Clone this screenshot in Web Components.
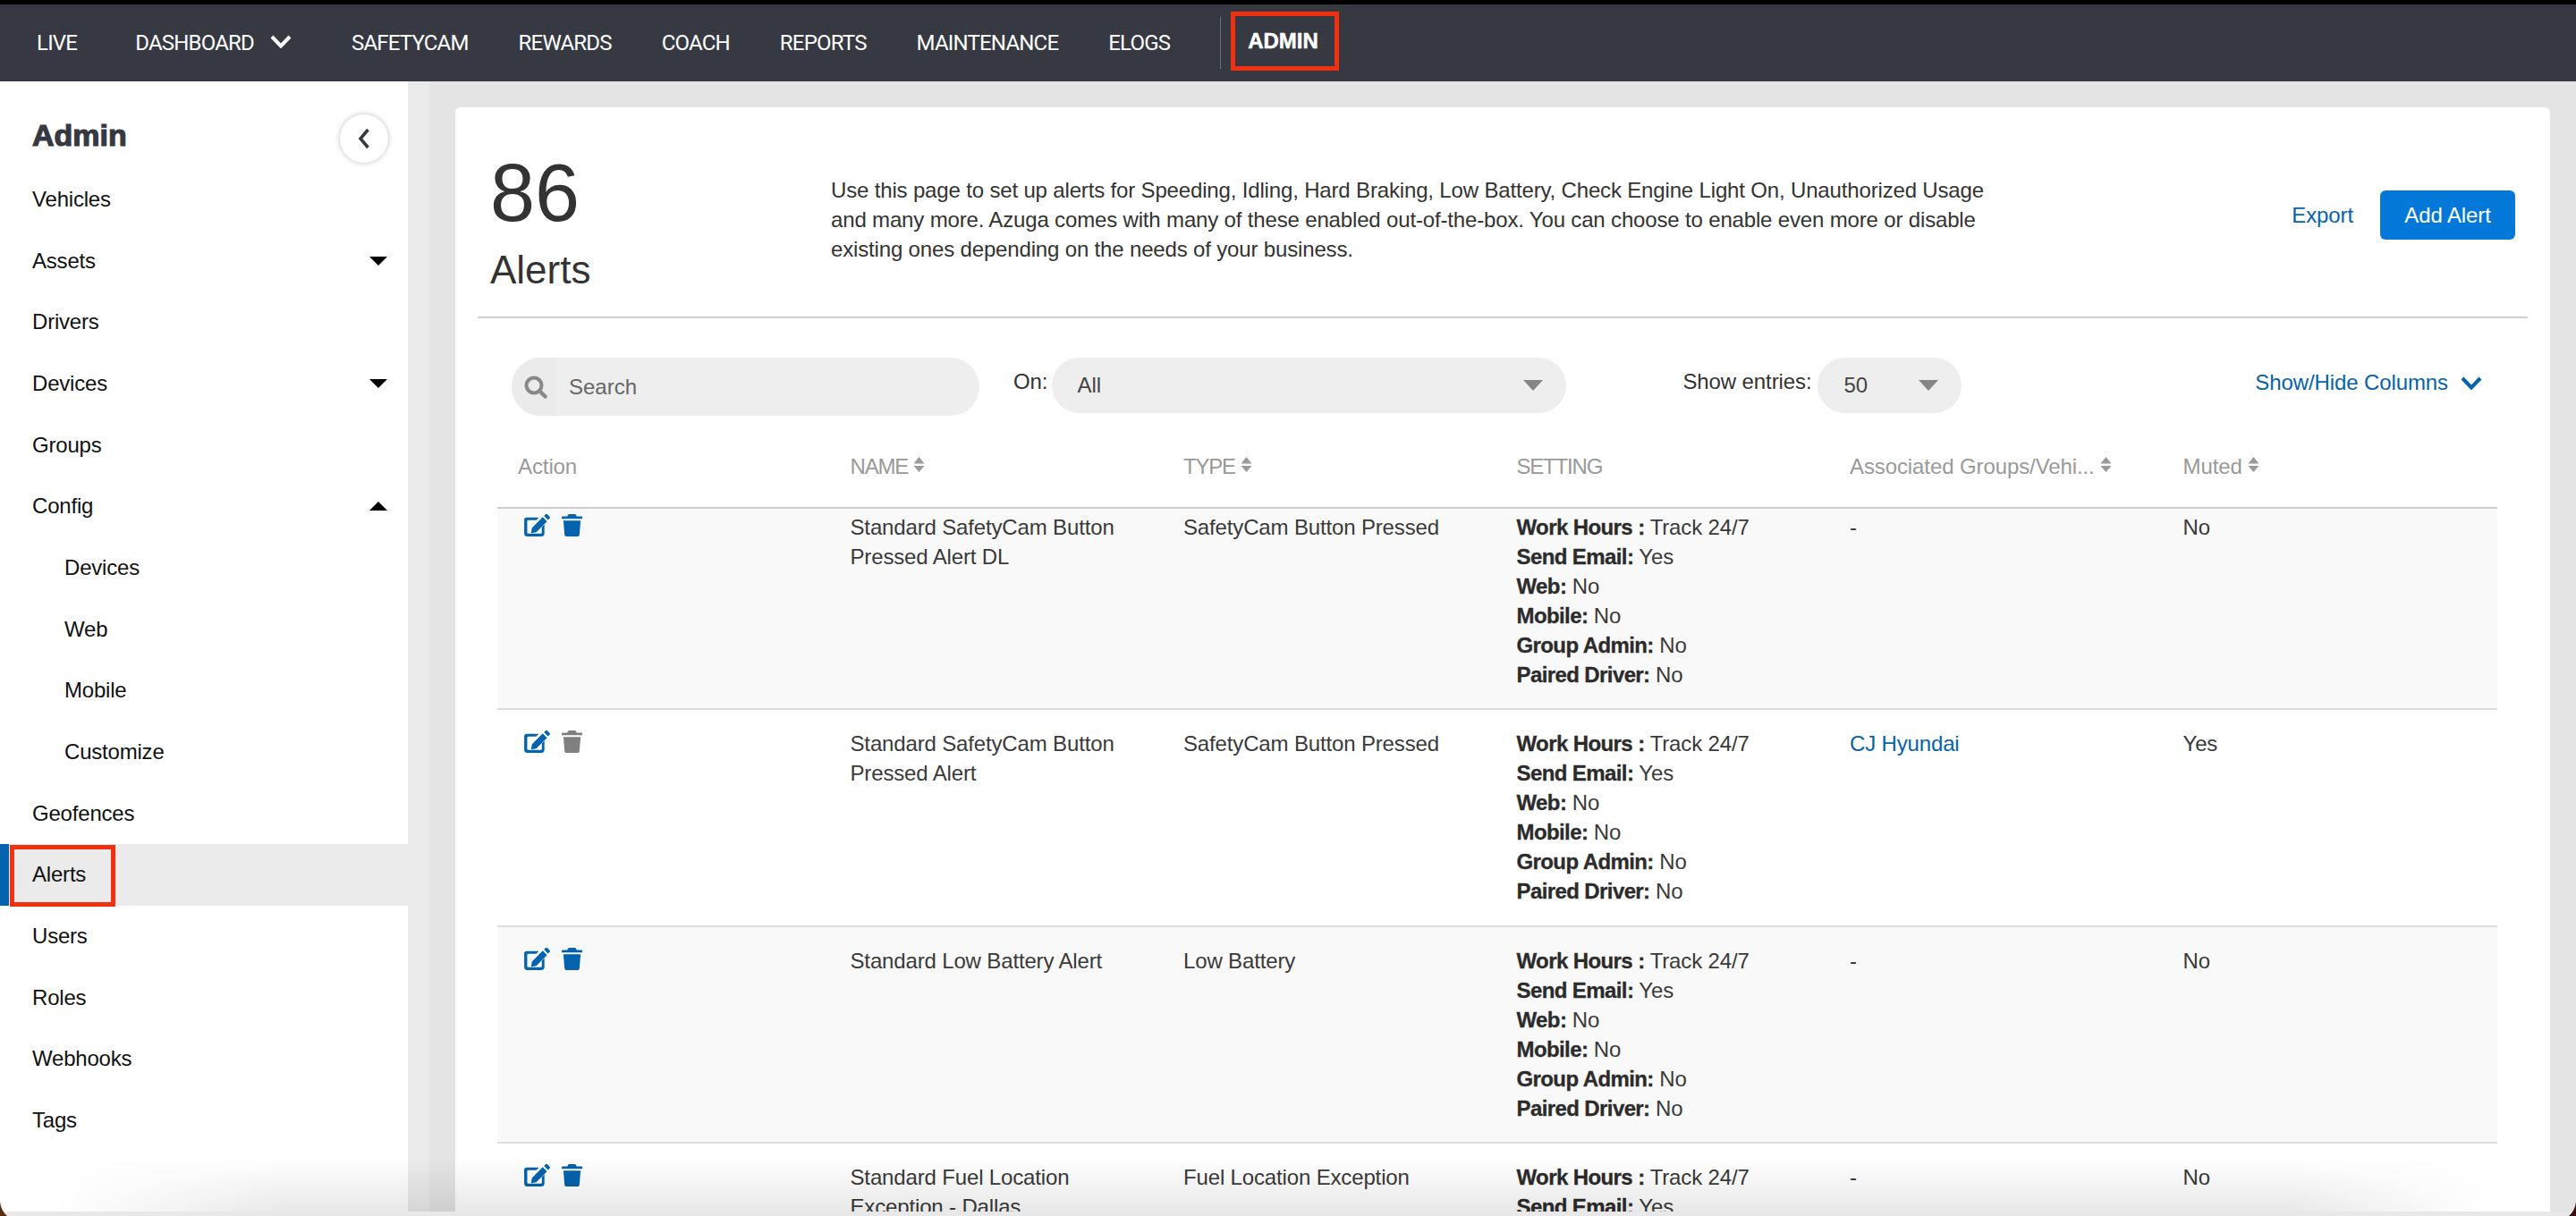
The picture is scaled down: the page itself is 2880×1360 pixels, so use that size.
<!DOCTYPE html>
<html lang="en">
<head>
<meta charset="UTF-8">
<title>Alerts</title>
<style>
  html, body { margin: 0; padding: 0; height: 100%; overflow: hidden; background: #e4e4e4; }
  body { font-family: "Liberation Sans", Arial, sans-serif; }
</style>
</head>
<body>
<admin-app></admin-app>

<script>
const ICONS = {
  edit: `<svg viewBox="0 0 30 26" width="29" height="25"><path fill="currentColor" d="M3 4h14l-3 3H4.500a1 1 0 0 0-1 1v13.500a1 1 0 0 0 1 1h15a1 1 0 0 0 1-1V15l3-3v10a4 4 0 0 1-4 4H4a4 4 0 0 1-4-4V7a3 3 0 0 1 3-3z"/><path fill="currentColor" d="M21.500 3.500l5 5L14 21l-6 1 1-6zM23 2l2-2c.6-.4 1.200-.4 1.700 0l3 3c.4.500.4 1.100 0 1.700l-2 2z"/></svg>`,
  trash: `<svg viewBox="0 0 24 26" width="23" height="25"><path fill="currentColor" d="M8 0h8l1.500 2.500H23a1 1 0 0 1 1 1V5.500H0V3.500a1 1 0 0 1 1-1h5.500zM2 7.500h20l-1.300 16.500a2 2 0 0 1-2 2H5.300a2 2 0 0 1-2-2z"/></svg>`,
  sort: `<svg viewBox="0 0 13 17" width="13" height="17"><path fill="#9a9a9a" d="M6.500 0l6 7.500H.5zM.5 10h12l-6 7z"/></svg>`,
  chevron: `<svg viewBox="0 0 24 15" width="24" height="15"><path fill="none" stroke="currentColor" stroke-width="4" d="M2 2l10 10.500L22 2"/></svg>`,
  search: `<svg viewBox="0 0 26 26" width="26" height="26"><circle cx="11" cy="11" r="8.500" fill="none" stroke="#888" stroke-width="4"/><path stroke="#888" stroke-width="4.500" stroke-linecap="round" d="M17.500 17.500l6 6"/></svg>`
};

class TopNav extends HTMLElement {
  constructor() {
    super();
    this.attachShadow({ mode: 'open' });
    this.shadowRoot.innerHTML = `
      <style>
        :host { display: flex; align-items: center; gap: 56px; height: 91px; box-sizing: border-box; flex: none; background: #363942;
          border-top: 5px solid #000; color: #fff; font: 24px Roboto, "Liberation Sans", sans-serif; padding-left: 41px; }
        a { color: #fff; white-space: nowrap; letter-spacing: -.8px; }
        .dash { display: flex; align-items: center; gap: 18px; margin-left: 9px; margin-right: 11px; }
        .dash svg { display: block; margin-top: -4px; }
        .last { display: flex; align-items: center; }
        .sep { width: 1px; height: 58px; background: #6c6e75; }
        .admin { font: 700 24px "Liberation Sans", sans-serif; letter-spacing: 0; -webkit-text-stroke: .5px #fff; margin-left: 11px; padding: 0 18px 0 14px; height: 66px; box-sizing: border-box;
          border: 5px solid #f2300f; display: flex; align-items: center; margin-top: -4px; }
      </style>
      <a>LIVE</a>
      <span class="dash"><a>DASHBOARD</a>${ICONS.chevron}</span>
      <a>SAFETYCAM</a>
      <a>REWARDS</a>
      <a>COACH</a>
      <a>REPORTS</a>
      <a>MAINTENANCE</a>
      <a>ELOGS</a>
      <span class="last"><span class="sep"></span><a class="admin">ADMIN</a></span>`;
  }
}

class SideItem extends HTMLElement {
  constructor() {
    super();
    this.attachShadow({ mode: 'open' });
    const caret = this.getAttribute('caret');
    this.shadowRoot.innerHTML = `
      <style>
        :host { display: flex; align-items: center; justify-content: space-between; height: 68.700px;
          box-sizing: border-box; padding-left: 36px; padding-right: 23px; font-size: 24px; letter-spacing: -.2px; color: #111; position: relative; }
        :host([sub]) { padding-left: 72px; }
        :host([active]) { background: #ebebeb; }
        :host([active])::before { content: ""; position: absolute; left: 0; top: 0; bottom: 0; width: 10px; background: #0463ad; }
        :host([active])::after { content: ""; position: absolute; left: 11px; top: 1px; width: 118px; height: 69px;
          box-sizing: border-box; border: 5px solid #f2300f; }
        .caret { width: 0; height: 0; border-left: 10.500px solid transparent; border-right: 10.500px solid transparent; }
        .down { border-top: 10px solid #000; }
        .up { border-bottom: 10px solid #000; }
      </style>
      <slot></slot>${caret ? `<span class="caret ${caret}"></span>` : ''}`;
  }
}

class SideBar extends HTMLElement {
  constructor() {
    super();
    this.attachShadow({ mode: 'open' });
    this.shadowRoot.innerHTML = `
      <style>
        :host { display: block; width: 456px; flex: none; background: #fff; height: 1269px; position: relative; }
        .head { display: flex; align-items: center; justify-content: space-between; height: 81px; padding: 0 22px 0 36px; box-sizing: border-box; margin-top: 23px; }
        h2 { margin: -6px 0 0; font-size: 34px; font-weight: 700; color: #363942; -webkit-text-stroke: 1.200px #363942; }
        .back { width: 54px; height: 54px; border-radius: 50%; background: #fff; box-shadow: 0 0 6px rgba(0,0,0,.25);
          display: flex; align-items: center; justify-content: center; }
        .items { margin-top: -6.500px; }
      </style>
      <div class="head"><h2>Admin</h2>
        <span class="back"><svg viewBox="0 0 14 24" width="14" height="24"><path d="M11.500 2L3 12l8.500 10" fill="none" stroke="#363942" stroke-width="3.500"/></svg></span>
      </div>
      <div class="items"><slot></slot></div>`;
  }
}

class SelectPill extends HTMLElement {
  constructor() {
    super();
    this.attachShadow({ mode: 'open' });
    this.shadowRoot.innerHTML = `
      <style>
        :host { display: flex; align-items: center; justify-content: space-between; height: 62px; box-sizing: border-box;
          border-radius: 31px; background: #eee; padding: 0 26px 0 28px; font-size: 24px; color: #444; }
        i { width: 0; height: 0; border-left: 11px solid transparent; border-right: 11px solid transparent; border-top: 12px solid #858585; }
      </style>
      <slot></slot><i></i>`;
  }
}

class SortHead extends HTMLElement {
  constructor() {
    super();
    this.attachShadow({ mode: 'open' });
    this.shadowRoot.innerHTML = `
      <style>
        :host { display: flex; align-items: flex-start; gap: 6px; color: #999; font-size: 24px; letter-spacing: -.1px; min-width: 0; }
        svg { display: block; margin-top: 3px; }
      </style>
      <slot></slot>${this.hasAttribute('nosort') ? '' : ICONS.sort}`;
  }
}

class AlertRow extends HTMLElement {
  constructor() {
    super();
    this.attachShadow({ mode: 'open' });
    const group = this.getAttribute('group') || '-';
    const linked = this.hasAttribute('linked');
    const rows = [['Work Hours :', 'Track 24/7'], ['Send Email:', 'Yes'], ['Web:', 'No'], ['Mobile:', 'No'],
      ['Group Admin:', 'No'], ['Paired Driver:', 'No']];
    this.shadowRoot.innerHTML = `
      <style>
        :host { display: grid; grid-template-columns: 372.500px 372.500px 372.500px 372.500px 372.500px 1fr; height: 242.400px;
          box-sizing: border-box; border-bottom: 2px solid #dedede; font-size: 24px; line-height: 33px; letter-spacing: -.15px; color: #3a3a3a; }
        :host([odd]) { background: #f9f9f9; }
        div { padding: 21px 0 0 22px; }
        b { color: #2b2b2b; letter-spacing: -.6px; -webkit-text-stroke: .3px #2b2b2b; }
        .act { display: flex; gap: 13px; padding-top: 23px; padding-left: 30px; align-items: flex-start; color: #0463ad; }
        .act svg { display: block; }
        .act span { display: block; height: 25px; }
        :host([muted-trash]) .trash { color: #808080; }
        .link { color: #0463ad; }
      </style>
      <div class="act"><span>${ICONS.edit}</span><span class="trash">${ICONS.trash}</span></div>
      <div>${this.getAttribute('name')}</div>
      <div>${this.getAttribute('type')}</div>
      <div>${rows.map(r => `<b>${r[0]}</b> ${r[1]}`).join('<br>')}</div>
      <div class="${linked ? 'link' : ''}">${group}</div>
      <div>${this.getAttribute('muted')}</div>`;
  }
}

class AlertCard extends HTMLElement {
  constructor() {
    super();
    this.attachShadow({ mode: 'open' });
    this.shadowRoot.innerHTML = `
      <style>
        :host { display: flex; flex-direction: column; background: #fff; border-radius: 6px 6px 0 0; width: 2342px; height: 1240px;
          overflow: hidden; color: #333; font-size: 24px; }
        .top { display: flex; flex: none; margin: 0 25px; height: 236px; box-sizing: border-box; border-bottom: 2px solid #d0d0d0; }
        .count { width: 395px; padding: 46px 0 0 14px; box-sizing: border-box; flex: none; color: #333; }
        .count .n { font-size: 90px; line-height: 100px; }
        .count .l { font-size: 44px; line-height: 60px; margin-top: 6px; }
        .desc { width: 1320px; flex: none; line-height: 33px; padding-top: 76px; color: #333; box-sizing: border-box; letter-spacing: -.16px; }
        .btns { margin-left: auto; display: flex; align-items: flex-start; padding-top: 93px; gap: 30px; padding-right: 14px; letter-spacing: -.1px; }
        .export { color: #0463ad; line-height: 56px; }
        .add { background: #0378d8; color: #fff; border-radius: 6px; height: 55px; width: 151px; display: flex; align-items: center; justify-content: center; }
        .filters { display: flex; flex: none; align-items: flex-start; height: 133px; padding: 44px 0 0 63px; box-sizing: border-box; }
        .search { width: 523px; height: 65px; border-radius: 33px; background: #eee; display: flex; align-items: center; flex: none;
          font-size: 24px; color: #666; overflow: hidden; margin-right: 38px; }
        .mag { width: 50px; height: 100%; background: #ebebeb; display: flex; align-items: center; justify-content: center; padding-left: 3px; box-sizing: border-box; margin-right: 14px; }
        .lbl { line-height: 54px; color: #333; margin-right: 5px; letter-spacing: -.1px; }
        .on { width: 575px; flex: none; margin-right: 130px; }
        .show { width: 161px; flex: none; margin-left: 1px; padding-left: 30px; }
        .cols { margin-left: auto; margin-right: 76px; display: flex; gap: 14px; align-items: center; color: #0463ad; line-height: 56px; white-space: nowrap; letter-spacing: -.1px; }
        .thead { margin: 0 59px 0 47px; flex: none; display: grid; grid-template-columns: 372.500px 372.500px 372.500px 372.500px 372.500px 1fr;
          height: 80px; box-sizing: border-box; padding-top: 19px; border-bottom: 2px solid #ccc; }
        .thead > * { padding-left: 22px; }
        .thead > :first-child { padding-left: 23px; }
        .thead > .caps { letter-spacing: -1.200px; }
        /* table body is scrolled a little, the first row runs under the header */
        .scroll { margin: 0 59px 0 47px; flex: 1; min-height: 0; overflow: hidden; }
        .rows { margin-top: -17px; }
      </style>
      <div class="top">
        <div class="count"><div class="n">86</div><div class="l">Alerts</div></div>
        <div class="desc">Use this page to set up alerts for Speeding, Idling, Hard Braking, Low Battery, Check Engine Light On, Unauthorized Usage and many more. Azuga comes with many of these enabled out-of-the-box. You can choose to enable even more or disable existing ones depending on the needs of your business.</div>
        <div class="btns"><span class="export">Export</span><span class="add">Add Alert</span></div>
      </div>
      <div class="filters">
        <div class="search"><span class="mag">${ICONS.search}</span>Search</div>
        <span class="lbl">On:</span>
        <select-pill class="on">All</select-pill>
        <span class="lbl">Show entries:</span>
        <select-pill class="show">50</select-pill>
        <span class="cols">Show/Hide Columns ${ICONS.chevron}</span>
      </div>
      <div class="thead">
        <sort-head nosort>Action</sort-head>
        <sort-head class="caps">NAME</sort-head>
        <sort-head class="caps">TYPE</sort-head>
        <sort-head class="caps" nosort>SETTING</sort-head>
        <sort-head>Associated Groups/Vehi...</sort-head>
        <sort-head>Muted</sort-head>
      </div>
      <div class="scroll"><div class="rows"><slot></slot></div></div>`;
  }
}

class AdminApp extends HTMLElement {
  constructor() {
    super();
    this.attachShadow({ mode: 'open' });
    this.shadowRoot.innerHTML = `
      <style>
        :host { display: flex; flex-direction: column; height: 1360px; overflow: hidden; background: #e4e4e4; position: relative; }
        .body { display: flex; flex: 1; min-height: 0; }
        .main { flex: 1; padding: 29px 0 0 53px; min-width: 0; background: linear-gradient(90deg, #ebebeb 0, #ebebeb 24px, #e4e4e4 24px); }
        /* window edge of the screenshot: soft shade, bottom strip, corners */
        .shade { position: absolute; left: 0; right: 0; bottom: 5px; height: 60px;
          background: linear-gradient(rgba(0,0,0,0), rgba(0,0,0,.09));
          -webkit-mask-image: linear-gradient(90deg, transparent 60px, #000 320px, #000 2560px, transparent 2780px); }
        .strip { position: absolute; left: 0; right: 0; bottom: 0; height: 5px; background: #e8e8e8; }
        .corner { position: absolute; bottom: 0; display: block; }
      </style>
      <top-nav></top-nav>
      <div class="body">
        <side-bar>
          <side-item>Vehicles</side-item>
          <side-item caret="down">Assets</side-item>
          <side-item>Drivers</side-item>
          <side-item caret="down">Devices</side-item>
          <side-item>Groups</side-item>
          <side-item caret="up">Config</side-item>
          <side-item sub>Devices</side-item>
          <side-item sub>Web</side-item>
          <side-item sub>Mobile</side-item>
          <side-item sub>Customize</side-item>
          <side-item>Geofences</side-item>
          <side-item active>Alerts</side-item>
          <side-item>Users</side-item>
          <side-item>Roles</side-item>
          <side-item>Webhooks</side-item>
          <side-item>Tags</side-item>
        </side-bar>
        <div class="main">
          <alert-card>
            <alert-row odd name="Standard SafetyCam Button Pressed Alert DL" type="SafetyCam Button Pressed" muted="No"></alert-row>
            <alert-row muted-trash linked group="CJ Hyundai" name="Standard SafetyCam Button Pressed Alert" type="SafetyCam Button Pressed" muted="Yes"></alert-row>
            <alert-row odd name="Standard Low Battery Alert" type="Low Battery" muted="No"></alert-row>
            <alert-row name="Standard Fuel Location Exception - Dallas" type="Fuel Location Exception" muted="No"></alert-row>
          </alert-card>
        </div>
      </div>
      <div class="shade"></div>
      <div class="strip"></div>
      <svg class="corner" style="left:0" width="8" height="16" viewBox="0 0 8 16"><path d="M0 0Q1 10 8 16H0z" fill="#5a2c12"/></svg>
      <svg class="corner" style="right:0" width="8" height="16" viewBox="0 0 8 16"><path d="M8 0Q7 10 0 16H8z" fill="#3a0d12"/></svg>`;
  }
}

customElements.define('top-nav', TopNav);
customElements.define('side-item', SideItem);
customElements.define('side-bar', SideBar);
customElements.define('select-pill', SelectPill);
customElements.define('sort-head', SortHead);
customElements.define('alert-row', AlertRow);
customElements.define('alert-card', AlertCard);
customElements.define('admin-app', AdminApp);
</script>
</body>
</html>
